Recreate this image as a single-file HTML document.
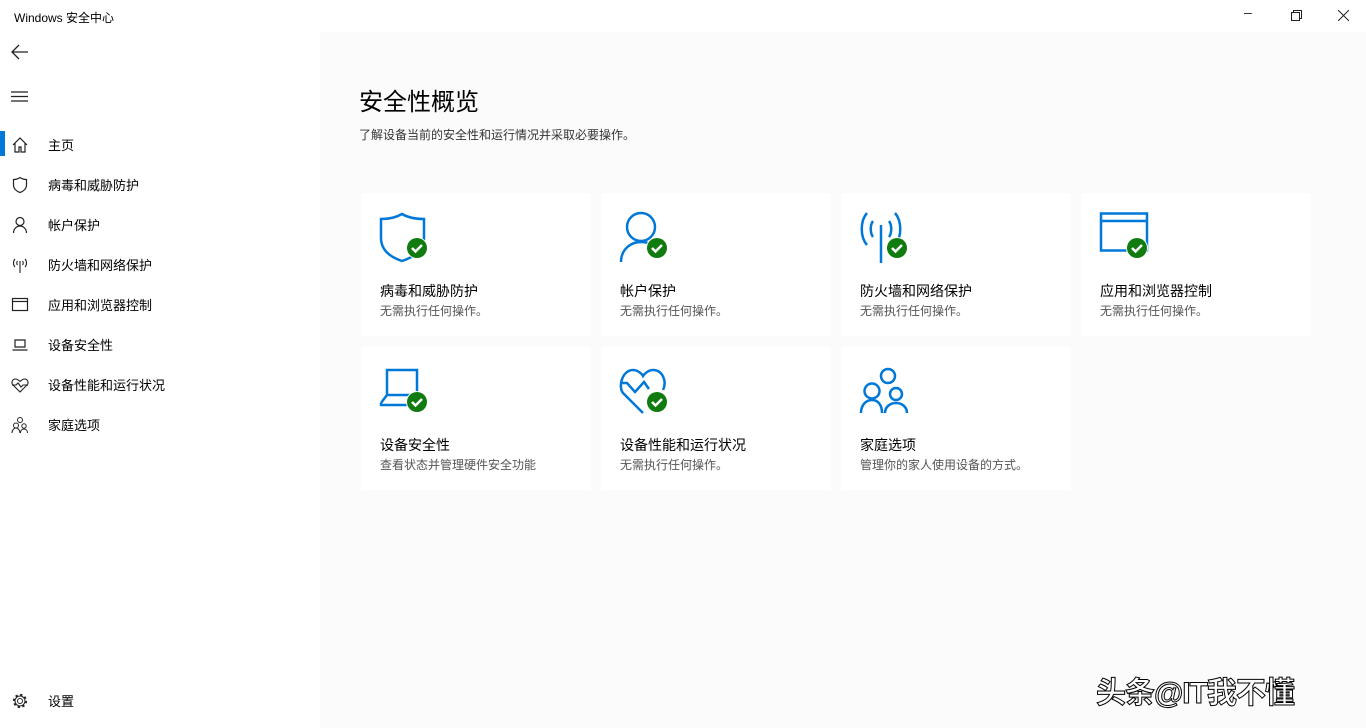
<!DOCTYPE html>
<html><head><meta charset="utf-8"><style>
*{margin:0;padding:0;box-sizing:border-box}
body{width:1366px;height:728px;overflow:hidden;background:#fff;font-family:"Liberation Sans","Noto Sans CJK SC",sans-serif;color:#000;position:relative}
.title{position:absolute;left:14px;top:9px;font-size:12px}
.ctl{position:absolute;top:4px;font-size:14px;color:#222}
.side{position:absolute;left:0;top:0;width:320px;height:728px}
.nav{position:absolute;left:0;width:320px;height:40px}
.nav .ic{position:absolute;left:11px;top:12px;width:18px;height:18px}
.nav .t{position:absolute;left:48px;top:11px;font-size:13px}
.main{position:absolute;left:320px;top:32px;width:1046px;height:696px;background:#fbfbfb}
h1{position:absolute;left:359px;top:82px;font-size:24px;font-weight:normal}
.sub{position:absolute;left:359px;top:126px;font-size:12px;color:#333}
.card{position:absolute;width:230px;height:143px;background:#fff}
.card svg{position:absolute;left:18px;top:18px}
.card .h{position:absolute;left:19px;top:88px;font-size:14px}
.card .d{position:absolute;left:19px;top:109px;font-size:12px;color:#555}
.wm{position:absolute;left:1096px;top:668px;font-size:30px;color:#fff;font-weight:bold;-webkit-text-stroke:1px #000;letter-spacing:-1px}
</style></head><body>
<div class="title">Windows 安全中心</div>
<div class="ctl" style="left:1244px">&#8211;</div>
<svg style="position:absolute;left:1291px;top:10px" width="11" height="11"><rect x="0.5" y="2.5" width="8" height="8" fill="none" stroke="#222"/><path d="M2.5 2.5V0.5h8v8h-2" fill="none" stroke="#222"/></svg>
<svg style="position:absolute;left:1338px;top:10px" width="11" height="11"><path d="M0 0L11 11M11 0L0 11" stroke="#222"/></svg>
<div class="side">
<svg style="position:absolute;left:11px;top:44px" width="18" height="16"><path d="M17 8H1M8 1L1 8l7 7" fill="none" stroke="#222" stroke-width="1.3"/></svg>
<svg style="position:absolute;left:11px;top:91px" width="18" height="12"><path d="M0 1h17M0 5.5h17M0 10h17" stroke="#222" stroke-width="1.2"/></svg>
<div style="position:absolute;left:0;top:131px;width:5px;height:25px;background:#0078d7"></div>
<div class="nav" style="top:124px"><svg class="ic" viewBox="0 0 18 18"><path d="M2 9L9 2l7 7M4 7v9h4v-5h2v5h4V7" fill="none" stroke="#222" stroke-width="1.2"/></svg><div class="t">主页</div></div>
<div class="nav" style="top:164px"><svg class="ic" viewBox="0 0 18 18"><path d="M9 1.5c2 1.5 4 2 6.5 2V9c0 4-3.5 6.5-6.5 7.5C6 15.5 2.5 13 2.5 9V3.5C5 3.5 7 3 9 1.5z" fill="none" stroke="#222" stroke-width="1.2"/></svg><div class="t">病毒和威胁防护</div></div>
<div class="nav" style="top:204px"><svg class="ic" viewBox="0 0 18 18"><circle cx="9" cy="5.5" r="4" fill="none" stroke="#222" stroke-width="1.2"/><path d="M2.5 17c0-4 3-7 6.5-7s6.5 3 6.5 7" fill="none" stroke="#222" stroke-width="1.2"/></svg><div class="t">帐户保护</div></div>
<div class="nav" style="top:244px"><svg class="ic" viewBox="0 0 18 18"><path d="M9 5v12M4 3c-2 2-2 6 0 8M14 3c2 2 2 6 0 8M6.5 5c-1 1-1 3 0 4M11.5 5c1 1 1 3 0 4" fill="none" stroke="#222" stroke-width="1.1"/></svg><div class="t">防火墙和网络保护</div></div>
<div class="nav" style="top:284px"><svg class="ic" viewBox="0 0 18 18"><rect x="1.5" y="2.5" width="15" height="12" fill="none" stroke="#222" stroke-width="1.2"/><path d="M1.5 5.5h15" stroke="#222" stroke-width="1.2"/></svg><div class="t">应用和浏览器控制</div></div>
<div class="nav" style="top:324px"><svg class="ic" viewBox="0 0 18 18"><path d="M4 4h10v7H4zM1.5 14h15" fill="none" stroke="#222" stroke-width="1.2"/></svg><div class="t">设备安全性</div></div>
<div class="nav" style="top:364px"><svg class="ic" viewBox="0 0 18 18"><path d="M9 16L2 9C0 7 1 3 4.5 3 6.5 3 8 4.5 9 5.5 10 4.5 11.5 3 13.5 3 17 3 18 7 16 9zM1 9h4l2-2 3 4 2-2h5" fill="none" stroke="#222" stroke-width="1.1"/></svg><div class="t">设备性能和运行状况</div></div>
<div class="nav" style="top:404px"><svg class="ic" viewBox="0 0 18 18"><circle cx="9" cy="4" r="2.5" fill="none" stroke="#222"/><circle cx="5" cy="9.5" r="2.5" fill="none" stroke="#222"/><circle cx="13" cy="10" r="2.2" fill="none" stroke="#222"/><path d="M1 17c0-3 2-5 4-5s4 2 4 5M9.5 17c0-2.5 1.5-4 3.5-4s3.5 1.5 3.5 4" fill="none" stroke="#222"/></svg><div class="t">家庭选项</div></div>
<div class="nav" style="top:680px"><svg class="ic" viewBox="0 0 18 18"><circle cx="9" cy="9" r="2.5" fill="none" stroke="#222"/><circle cx="9" cy="9" r="6" fill="none" stroke="#222" stroke-width="2.2" stroke-dasharray="2.2 2.5"/><circle cx="9" cy="9" r="5" fill="none" stroke="#222"/></svg><div class="t">设置</div></div>
</div>
<div class="main"></div>
<h1>安全性概览</h1>
<div class="sub">了解设备当前的安全性和运行情况并采取必要操作。</div>

<div class="card" style="left:361px;top:193px"><svg width="60" height="60" viewBox="0 0 60 60"><path d="M23 3c5 3 11 5 22 5v19c0 12-10 19-22 23C11 46 2 39 2 27V8C12 8 18 6 23 3z" fill="none" stroke="#0078d7" stroke-width="2.5"/><circle cx="38" cy="37" r="11" fill="#fff"/><circle cx="38" cy="37" r="10" fill="#107c10"/><path d="M33 37l3.5 3.5L43 34" fill="none" stroke="#fff" stroke-width="2.5"/></svg><div class="h">病毒和威胁防护</div><div class="d">无需执行任何操作。</div></div>
<div class="card" style="left:601px;top:193px"><svg width="60" height="60" viewBox="0 0 60 60"><circle cx="22" cy="16" r="14" fill="none" stroke="#0078d7" stroke-width="2.5"/><path d="M2 51c0-12 9-20 20-20 6 0 11 2 14 6" fill="none" stroke="#0078d7" stroke-width="2.5"/><circle cx="38" cy="37" r="11" fill="#fff"/><circle cx="38" cy="37" r="10" fill="#107c10"/><path d="M33 37l3.5 3.5L43 34" fill="none" stroke="#fff" stroke-width="2.5"/></svg><div class="h">帐户保护</div><div class="d">无需执行任何操作。</div></div>
<div class="card" style="left:841px;top:193px"><svg width="60" height="60" viewBox="0 0 60 60"><path d="M22 14v38M8 2c-7 8-7 24 0 32M36 2c7 8 7 24 0 32M14 10c-3 4-3 12 0 16M30 10c3 4 3 12 0 16" fill="none" stroke="#0078d7" stroke-width="2.5"/><circle cx="38" cy="37" r="11" fill="#fff"/><circle cx="38" cy="37" r="10" fill="#107c10"/><path d="M33 37l3.5 3.5L43 34" fill="none" stroke="#fff" stroke-width="2.5"/></svg><div class="h">防火墙和网络保护</div><div class="d">无需执行任何操作。</div></div>
<div class="card" style="left:1081px;top:193px"><svg width="60" height="60" viewBox="0 0 60 60"><rect x="2" y="2.5" width="46" height="37" fill="none" stroke="#0078d7" stroke-width="2.5"/><path d="M2 10h46" stroke="#0078d7" stroke-width="2.5"/><circle cx="38" cy="37" r="11" fill="#fff"/><circle cx="38" cy="37" r="10" fill="#107c10"/><path d="M33 37l3.5 3.5L43 34" fill="none" stroke="#fff" stroke-width="2.5"/></svg><div class="h">应用和浏览器控制</div><div class="d">无需执行任何操作。</div></div>
<div class="card" style="left:361px;top:347px"><svg width="60" height="60" viewBox="0 0 60 60"><path d="M8 5h30v25H8zM2 38l6-8M2 38v2h32" fill="none" stroke="#0078d7" stroke-width="2.5"/><circle cx="38" cy="37" r="11" fill="#fff"/><circle cx="38" cy="37" r="10" fill="#107c10"/><path d="M33 37l3.5 3.5L43 34" fill="none" stroke="#fff" stroke-width="2.5"/></svg><div class="h">设备安全性</div><div class="d">查看状态并管理硬件安全功能</div></div>
<div class="card" style="left:601px;top:347px"><svg width="60" height="60" viewBox="0 0 60 60"><path d="M24 48L4 28C-1 22 3 5 14 5c5 0 9 4 10 6 2-3 6-6 10-6 10 0 14 12 10 20M2 18h6l8 9 9-10 5 7" fill="none" stroke="#0078d7" stroke-width="2.5"/><circle cx="38" cy="37" r="11" fill="#fff"/><circle cx="38" cy="37" r="10" fill="#107c10"/><path d="M33 37l3.5 3.5L43 34" fill="none" stroke="#fff" stroke-width="2.5"/></svg><div class="h">设备性能和运行状况</div><div class="d">无需执行任何操作。</div></div>
<div class="card" style="left:841px;top:347px"><svg width="60" height="60" viewBox="0 0 60 60"><circle cx="29" cy="11" r="7" fill="none" stroke="#0078d7" stroke-width="2.5"/><circle cx="13" cy="26" r="7.5" fill="none" stroke="#0078d7" stroke-width="2.5"/><circle cx="37" cy="29" r="6" fill="none" stroke="#0078d7" stroke-width="2.5"/><path d="M2 48c0-8 5-13 11-13s10 5 10 13M26 48c0-6 5-10 11-10s11 4 11 10" fill="none" stroke="#0078d7" stroke-width="2.5"/></svg><div class="h">家庭选项</div><div class="d">管理你的家人使用设备的方式。</div></div>
<div class="wm">头条@IT我不懂</div>
</body></html>
